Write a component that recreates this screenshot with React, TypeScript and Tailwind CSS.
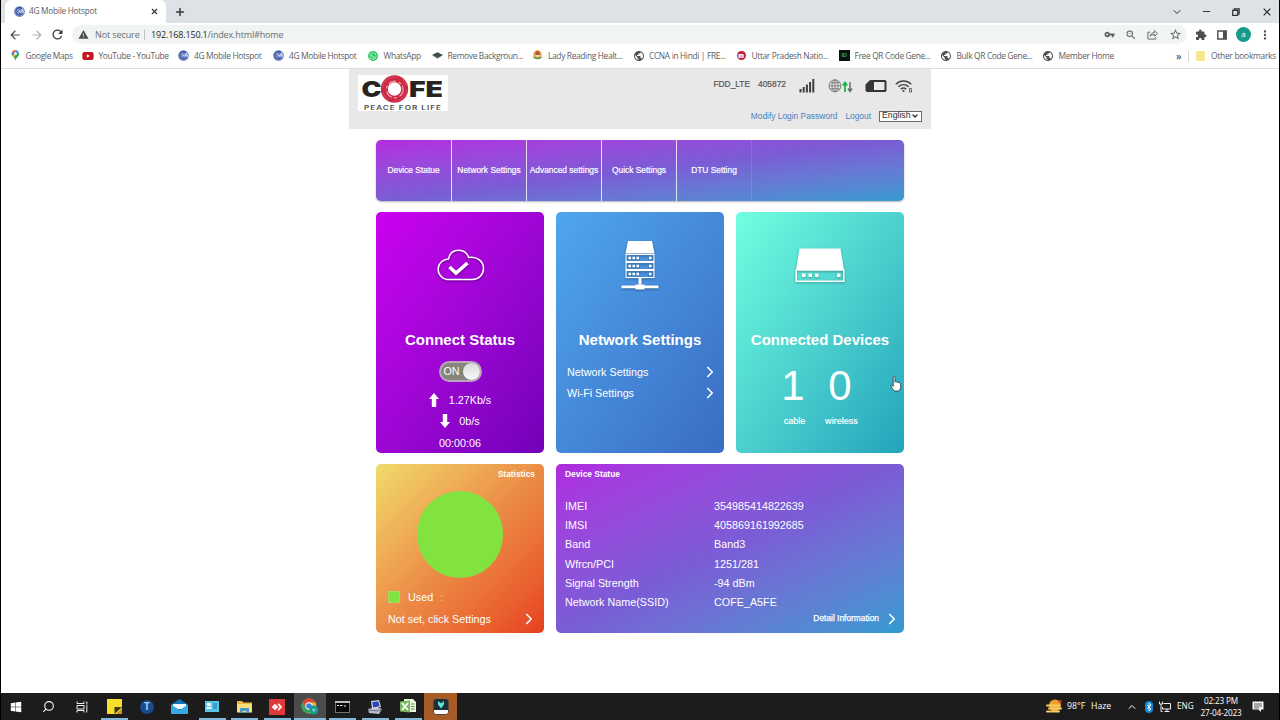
import type { ReactNode } from 'react'
import clsx from 'clsx'
import {
  MdArrowBack,
  MdArrowForward,
  MdExtension,
  MdMoreVert,
  MdPublic,
  MdRefresh,
  MdStarBorder,
  MdVpnKey,
  MdWarning,
  MdZoomOut,
} from 'react-icons/md'
import { FaWhatsapp, FaWindows, FaYoutube } from 'react-icons/fa'
import { ChevronDown, ChevronRight, ChevronUp, Minus, Plus, Search, X } from 'lucide-react'

/* ---------- favicons ---------- */

function HotspotIcon() {
  return (
    <svg viewBox="0 0 20 20" className="h-[11px] w-[11px]">
      <circle cx="10" cy="10" r="9.600" fill="#5a76b8" />
      <circle cx="10" cy="10" r="8.200" fill="#b9c8e8" />
      <path d="M14.500 4.800A6.600 6.600 0 1 0 16 12.800" fill="none" stroke="#2d4796" strokeWidth="2.400" />
      <path d="M13 8a3.400 3.400 0 1 0 .4 3.600" fill="none" stroke="#2d4796" strokeWidth="1.800" />
    </svg>
  )
}

function MapsIcon() {
  return (
    <svg viewBox="0 0 20 24" className="h-[11px] w-[9px]">
      <path d="M10 0a8 8 0 0 0-6.500 3.300L8 7z" fill="#ea4335" />
      <path d="M3.500 3.300A8 8 0 0 0 3 13l5-6z" fill="#4a6fb5" />
      <path d="M10 0a8 8 0 0 1 7 4l-10 12-4-3 6-7z" fill="#4285f4" />
      <path d="M17 4c2 4 1 8-2 11-3 3-4 5-5 9-1-4-2-6-5-9z" fill="#34a853" />
      <path d="M3 13l4-4 3 3-4 4z" fill="#fbbc04" />
      <circle cx="10" cy="8" r="3" fill="#fff" />
    </svg>
  )
}

function StackIcon() {
  return (
    <svg viewBox="0 0 20 12" className="h-[7px] w-[11px]">
      <path d="M10 0l10 5-10 6L0 5z" fill="#3f4c50" />
      <path d="M3 7l7 4 7-4" fill="none" stroke="#7d9c95" strokeWidth="1.500" />
    </svg>
  )
}

function LadyIcon() {
  return (
    <svg viewBox="0 0 20 20" className="h-[11px] w-[11px]">
      <circle cx="10" cy="8" r="7.500" fill="#e2a64a" />
      <circle cx="10" cy="8" r="4.500" fill="#f6dcc0" />
      <path d="M6 6a4 4 0 0 1 8 0v3H6z" fill="#b5523b" />
      <path d="M1 11c2 8 16 8 18 0-4 4-14 4-18 0z" fill="#5d8e3c" />
    </svg>
  )
}

function MicrosoftMark() {
  return (
    <div className="flex h-[9px] w-[9px] items-center justify-center rounded-full bg-[#c51f30] font-['Inter'] text-[6px] font-black text-white">
      m
    </div>
  )
}

const globe = <MdPublic className="h-[12px] w-[12px] text-[#4d5156]" />

const bookmarks: { label: string; icon: ReactNode; width: string }[] = [
  { label: 'Google Maps', icon: <MapsIcon />, width: 'w-[73px]' },
  { label: 'YouTube - YouTube', icon: <FaYoutube className="h-[12px] w-[12px] text-[#c4161f]" />, width: 'w-[95.500px]' },
  { label: '4G Mobile Hotspot', icon: <HotspotIcon />, width: 'w-[95px]' },
  { label: '4G Mobile Hotspot', icon: <HotspotIcon />, width: 'w-[94.500px]' },
  { label: 'WhatsApp', icon: <div className="flex h-[10px] w-[10px] items-center justify-center rounded-full bg-[#25c55b]"><FaWhatsapp className="h-[8px] w-[8px] text-white" /></div>, width: 'w-[64px]' },
  { label: 'Remove Backgroun...', icon: <StackIcon />, width: 'w-[100.500px]' },
  { label: 'Lady Reading Healt...', icon: <LadyIcon />, width: 'w-[101px]' },
  { label: 'CCNA in Hindi | FRE...', icon: globe, width: 'w-[102.500px]' },
  { label: 'Uttar Pradesh Natio...', icon: <MicrosoftMark />, width: 'w-[103px]' },
  { label: 'Free QR Code Gene...', icon: <div className="flex h-[11px] w-[11px] items-center justify-center bg-[#08130e] text-[6px] font-bold text-[#2f9465]">ID</div>, width: 'w-[102px]' },
  { label: 'Bulk QR Code Gene...', icon: globe, width: 'w-[102px]' },
  { label: 'Member Home', icon: globe, width: 'w-[134px]' },
]

/* ---------- browser chrome ---------- */

function Browser() {
  return (
    <div className="h-[69px] border-b border-[#dcdedf] bg-white font-['Open_Sans',sans-serif] text-[#5a5e63]">
      <div className="flex h-[23px] items-center bg-[#dee1e5] pl-[4px]">
        <div className="flex h-full w-[161px] items-center rounded-t-[6px] bg-white pl-[9px]">
          <HotspotIcon />
          <span className="ml-[4px] w-[120.500px] whitespace-nowrap text-[8.300px] tracking-[-0.270px]">4G Mobile Hotspot</span>
          <X className="h-[9px] w-[9px] text-[#2d3034]" strokeWidth={3} />
        </div>
        <Plus className="ml-[8px] h-[12px] w-[12px] text-[#35383b]" strokeWidth={3} />
        <div className="ml-auto flex items-center pr-[6px] text-[#303336]">
          <ChevronDown className="mr-[18px] h-[12px] w-[12px]" strokeWidth={2} />
          <Minus className="mr-[20px] h-[11px] w-[11px]" strokeWidth={2.2} />
          <svg viewBox="0 0 8 8" className="mr-[21px] h-[8px] w-[8px]" fill="none" stroke="currentColor">
            <path d="M.7 2.300h5v5h-5zM2.200 2V.8h5v5H6" strokeWidth="1.200" />
          </svg>
          <X className="h-[12px] w-[12px]" strokeWidth={2.2} />
        </div>
      </div>

      <div className="flex h-[23px] items-center pl-[7px]">
        <MdArrowBack className="h-[14px] w-[14px] text-[#4b4e52]" />
        <MdArrowForward className="ml-[7.500px] h-[14px] w-[14px] text-[#b0b3b6]" />
        <MdRefresh className="ml-[6.500px] h-[15px] w-[15px] text-[#3c3f43]" />
        <div className="ml-[7px] flex h-[19px] w-[1115px] items-center rounded-full bg-[#f0f4f2] pl-[6px] pr-[5px] text-[9px]">
          <MdWarning className="h-[11px] w-[11px] text-[#4b4e52]" />
          <span className="ml-[6px] w-[46px] whitespace-nowrap tracking-[-0.100px] text-[#6a6e72]">Not secure</span>
          <span className="ml-[3px] h-[10px] w-px bg-[#bfc3c5]" />
          <span className="ml-[6px] whitespace-nowrap tracking-[-0.150px] text-[#696d71]">
            <span className="text-[#25282b]">192.168.150.1</span>/index.html#home
          </span>
          <div className="ml-auto flex items-center text-[#5c6064]">
            <MdVpnKey className="mr-[10px] h-[11px] w-[11px]" />
            <MdZoomOut className="mr-[10px] h-[12px] w-[12px]" />
            <svg viewBox="0 0 12 12" className="mr-[11px] h-[11px] w-[11px]" fill="none" stroke="currentColor">
              <path d="M3.500 3.500H1v7.500h8.500V9M3.500 8c.4-3 2-4 4.500-4V1.800L11.500 5 8 8V6c-2 0-3.500.5-4.500 2z" />
            </svg>
            <MdStarBorder className="h-[13px] w-[13px]" />
          </div>
        </div>
        <MdExtension className="ml-[8px] h-[12px] w-[12px] text-[#4b4e52]" />
        <svg viewBox="0 0 10 10" className="ml-[10px] h-[10px] w-[10px] text-[#4b4e52]">
          <path d="M.8 1h8.400v8H.8z" fill="none" stroke="currentColor" strokeWidth="1.400" />
          <path d="M6 1h3v8H6z" fill="currentColor" />
        </svg>
        <div className="ml-[9px] flex h-[15px] w-[15px] items-center justify-center rounded-full bg-[#169b8c] pb-px text-[8px] text-white">a</div>
        <MdMoreVert className="ml-[7px] h-[14px] w-[14px] text-[#4b4e52]" />
      </div>

      <div className="flex h-[20px] items-center pl-[8px] text-[8.400px] tracking-[-0.340px]">
        {bookmarks.map(({ label, icon, width }, i) => (
          <div key={i} className={clsx('flex shrink-0 items-center whitespace-nowrap', width)}>
            <span className="mr-[4.500px] flex w-[12px] justify-center">{icon}</span>
            {label}
          </div>
        ))}
        <span className="w-[12px] shrink-0 text-[10px] font-semibold leading-none">»</span>
        <span className="h-[11px] w-px bg-[#d4d6d8]" />
        <span className="ml-[7px] h-[10px] w-[9px] rounded-[1px] bg-[#f6e68f]" />
        <span className="ml-[6px] whitespace-nowrap tracking-[-0.250px]">Other bookmarks</span>
      </div>
    </div>
  )
}

/* ---------- router page ---------- */

function Logo() {
  return (
    <svg viewBox="0 0 90 36" className="h-[36px] w-[90px] bg-white">
      <g fontFamily="Inter, sans-serif" fontWeight="900" fill="#262321">
        <text x="3.500" y="22" fontSize="21.500" textLength="20" lengthAdjust="spacingAndGlyphs">C</text>
        <text x="51" y="22" fontSize="21.500" textLength="34" lengthAdjust="spacingAndGlyphs">FE</text>
      </g>
      <circle cx="36.500" cy="14" r="10.200" fill="none" stroke="#cd2844" strokeWidth="7" />
      <circle cx="36.500" cy="14" r="12.200" fill="none" stroke="#de6275" strokeWidth=".6" strokeDasharray="20 6 8 5" />
      <circle cx="36.800" cy="14.500" r="8.300" fill="none" stroke="#eda5ae" strokeWidth="1.200" strokeDasharray="8 3 3 2" />
      <text x="6" y="34.800" fontSize="5.600" fontFamily="Inter, sans-serif" fontWeight="600" fill="#4c4746" textLength="78" lengthAdjust="spacingAndGlyphs" letterSpacing=".7">
        PEACE FOR LIFE
      </text>
    </svg>
  )
}

function Header() {
  return (
    <header className="flex h-[60px] justify-between bg-[#e8e8e8] pl-[9px] pr-[9px]">
      <div className="pt-[6px]">
        <Logo />
      </div>
      <div className="flex flex-col items-end text-[8.400px]">
        <div className="flex h-[34px] items-center pr-[9px] text-[#555] [-webkit-text-stroke:0.2px]">
          <span className="mr-[8px] pb-[3px]">FDD_LTE</span>
          <span className="mr-[13px] pb-[3px]">405872</span>
          <svg viewBox="0 0 16 14" className="mr-[13px] h-[14px] w-[16px]" fill="#3f3f3f">
            <path d="M.5 10h2v3.500h-2zM3.700 8h2v5.500h-2zM6.900 5.500h2v8h-2zM10.100 3h2v10.500h-2zM13.300 0h2v13.500h-2z" />
          </svg>
          <svg viewBox="0 0 25 14" className="mr-[12px] h-[14px] w-[25px]" fill="none">
            <g stroke="#777" strokeWidth=".9">
              <circle cx="7" cy="6.800" r="6" />
              <ellipse cx="7" cy="6.800" rx="3" ry="6" />
              <path d="M7 .8v12M1 6.800h12M2 3.800h10M2 9.800h10" />
            </g>
            <path d="M17 13V5M14.800 6.500L17 3.500l2.200 3" stroke="#19b34b" strokeWidth="1.800" />
            <path d="M22 3v8M20 9.500l2 3 2-3" stroke="#5f7465" strokeWidth="1.500" />
          </svg>
          <svg viewBox="0 0 22 14" className="mr-[8px] h-[14px] w-[22px]">
            <path d="M5 1.500h15a1 1 0 0 1 1 1v9a1 1 0 0 1-1 1H2a1 1 0 0 1-1-1V5.500z" fill="#353535" stroke="#353535" />
            <path d="M9 3h10.500v8H9z" fill="#e8e8e8" />
          </svg>
          <svg viewBox="0 0 18 14" className="h-[14px] w-[18px]" fill="none" stroke="#444">
            <path d="M.8 5.200c4.500-4.300 11-4.300 15.400 0M3.300 7.800c3.200-2.900 7.300-2.900 10.400 0M5.800 10.200c1.800-1.500 3.700-1.500 5.400 0" strokeWidth="1.500" />
            <circle cx="8.500" cy="12" r="1.100" fill="#444" stroke="none" />
            <path d="M14.500 9.500h2v3.500h-2z" strokeWidth=".8" />
          </svg>
        </div>
        <div className="flex h-[26px] items-center whitespace-nowrap text-[#4b7fc0]">
          <span className="mr-[8px]">Modify Login Password</span>
          <span className="mr-[8px]">Logout</span>
          <span className="flex h-[11px] w-[43px] items-center justify-between border border-[#6b6b6b] bg-white pl-[2px] pr-[2px] text-[8.700px] text-[#2b2b2b]">
            English
            <ChevronDown className="h-[8px] w-[8px]" strokeWidth={4} />
          </span>
        </div>
      </div>
    </header>
  )
}

const navItems = ['Device Statue', 'Network Settings', 'Advanced settings', 'Quick Settings', 'DTU Setting']

function Nav() {
  return (
    <nav className="mt-[11px] flex h-[61px] overflow-hidden rounded-[5px] bg-gradient-to-br from-[#b32ae0] via-[#7a5cd6] to-[#2f9ad0] shadow-[0_1px_2px_rgba(0,0,0,0.3)]">
      {navItems.map((item, i) => (
        <div
          key={item}
          className={clsx(
            'flex w-[75px] items-center justify-center whitespace-nowrap border-r pb-[1px] text-[8.400px] text-white [-webkit-text-stroke:0.2px]',
            i === navItems.length - 1 ? 'border-white/10' : 'border-white/80',
            i === 0 && 'w-[76px]',
          )}
        >
          {item}
        </div>
      ))}
    </nav>
  )
}

function Card({ title, icon, className, children }: { title: string; icon: ReactNode; className: string; children: ReactNode }) {
  return (
    <section className={clsx('h-[241px] w-[168px] rounded-[5px] bg-gradient-to-br text-white', className)}>
      <div className="flex h-[106px] items-center justify-center">{icon}</div>
      <h2 className="flex h-[43px] items-center justify-center whitespace-nowrap pt-[2px] text-[15px] font-bold">{title}</h2>
      {children}
    </section>
  )
}

function CloudIcon() {
  return (
    <svg viewBox="0 0 50 36" className="h-[36px] w-[50px] drop-shadow-[0_1px_1px_rgba(0,0,0,0.4)]" fill="none" stroke="#fff">
      <path
        d="M12 32.500A10.300 10.300 0 0 1 13.500 12c1-5.500 5-8.800 10.300-8.800 4.800 0 8.400 2.900 9.900 7.300 8-1.500 14.800 3.500 14.800 10.800 0 6.500-4.700 11.200-11 11.200z"
        strokeWidth="1.500"
      />
      <path d="M14.500 20l6.500 6L32.500 16" strokeWidth="3.600" />
    </svg>
  )
}

function ServerIcon() {
  return (
    <svg viewBox="0 0 40 52" className="h-[52px] w-[40px] drop-shadow-[0_1px_1px_rgba(0,0,0,0.35)]" fill="#fff">
      <path d="M8 2h24l2.500 12.500h-29z" />
      {[15.5, 23.5, 31.5].map((y) => (
        <g key={y}>
          <rect x="6" y={y} width="28" height="7" fill="none" stroke="#fff" strokeWidth="1.100" />
          <path d={`M8.500 ${y + 2.300}h2.500v2.400H8.500zM12.500 ${y + 2.300}h2.500v2.400h-2.500zM16.500 ${y + 2.300}h2.500v2.400h-2.500zM29 ${y + 2.300}h2.500v2.400H29z`} />
        </g>
      ))}
      <path d="M18.500 38.500h3v7h-3zM1.500 46.500h37v2.800h-37z" />
      <path d="M15.500 45.500h9v5h-9z" />
    </svg>
  )
}

function RouterIcon() {
  return (
    <svg viewBox="0 0 52 36" className="h-[36px] w-[52px] drop-shadow-[0_1px_1px_rgba(0,0,0,0.3)]" fill="#fff">
      <path d="M5.500 1.500h41L50 23H2z" />
      <path d="M2.200 23h47.600v11.300H2.200z" fill="none" stroke="#fff" strokeWidth="1.500" />
      <path d="M8 26.500h3.500V30H8zM14.500 26.500H18V30h-3.500zM21 26.500h3.500V30H21zM43 26.500h3.500V30H43z" />
    </svg>
  )
}

function Arrow({ down = false }: { down?: boolean }) {
  return (
    <svg viewBox="0 0 10 14" className={clsx('h-[14px] w-[10px]', down && 'rotate-180')} fill="#fff">
      <path d="M5 0l5 6H7.200v8H2.800V6H0z" />
    </svg>
  )
}

const Go = () => <ChevronRight className="h-[18px] w-[18px]" strokeWidth={2.2} />

function HandCursor() {
  return (
    <svg viewBox="0 0 12 17" className="absolute left-[154px] top-[164px] h-[16px] w-[12px]">
      <path
        d="M3 1.500c0-1.300 2-1.300 2 0v5c.3-.8 1.800-.7 2 .3.500-.7 1.800-.4 1.900.5.600-.5 2-.2 2 1V12c0 2.500-1.200 4-3.500 4H5.500C3.500 16 2.500 14 .8 11c-.6-1.200.7-1.800 1.300-1l.9 1z"
        fill="#fff"
        stroke="#234"
        strokeWidth=".9"
      />
    </svg>
  )
}

const deviceInfo = [
  ['IMEI', '354985414822639'],
  ['IMSI', '405869161992685'],
  ['Band', 'Band3'],
  ['Wfrcn/PCI', '1251/281'],
  ['Signal Strength', '-94 dBm'],
  ['Network Name(SSID)', 'COFE_A5FE'],
]

function Dashboard() {
  return (
    <div className="mx-auto w-[528px] text-[10.780px]">
      <Nav />
      <div className="mt-[11px] flex gap-[12px]">
        <Card title="Connect Status" icon={<CloudIcon />} className="from-[#cb00f0] to-[#7200b8]">
          <div className="mx-auto flex h-[21px] w-[43px] items-center justify-between rounded-full border-2 border-[#b9a5bd] bg-[#85857c] pl-[3px]">
            <span>ON</span>
            <span className="h-[17px] w-[17px] rounded-full bg-gradient-to-b from-[#d9d9d9] to-[#fafafa]" />
          </div>
          <div className="mt-[7px] text-center">
            <div className="flex h-[21.400px] items-center justify-center gap-[10px]">
              <Arrow /> 1.27Kb/s
            </div>
            <div className="flex h-[21.400px] items-center justify-center gap-[9px]">
              <Arrow down /> 0b/s
            </div>
            <div className="flex h-[21.400px] items-center justify-center pt-px">00:00:06</div>
          </div>
        </Card>

        <Card title="Network Settings" icon={<ServerIcon />} className="from-[#50a6ee] to-[#3a6cc3]">
          {['Network Settings', 'Wi-Fi Settings'].map((label) => (
            <div key={label} className="flex h-[21.500px] items-center justify-between pl-[11px] pr-[5px]">
              {label}
              <Go />
            </div>
          ))}
        </Card>

        <div className="relative">
          <Card title="Connected Devices" icon={<RouterIcon />} className="from-[#72ffe0] to-[#22a4bb]">
            <div className="flex pl-[35px] text-center">
              {[['1', 'cable'], ['0', 'wireless']].map(([count, label]) => (
                <div key={label} className="w-[47px]">
                  <div className="h-[49px] pr-[3px] text-[42px] leading-[49px]">{count}</div>
                  <div className="text-[9.100px] leading-[23px] [-webkit-text-stroke:0.15px]">{label}</div>
                </div>
              ))}
            </div>
          </Card>
          <HandCursor />
        </div>
      </div>

      <div className="mt-[11px] flex gap-[12px] text-white">
        <section className="h-[169px] w-[168px] rounded-[5px] bg-gradient-to-br from-[#efdb6b] via-[#eb8c46] to-[#e73e20]">
          <h3 className="h-[27px] pr-[9px] text-right text-[8.400px] font-bold leading-[21px]">Statistics</h3>
          <div className="mx-auto h-[87px] w-[86px] rounded-full bg-[#82e340]" />
          <div className="mt-[8px] flex h-[22px] items-center pl-[12px]">
            <span className="mr-[8px] h-[12px] w-[12px] border border-[#a5dc60] bg-[#82e340]" />
            Used
            <span className="ml-[7px] opacity-60">:</span>
          </div>
          <div className="flex h-[22px] items-center justify-between pl-[12px] pr-[6px]">
            Not set, click Settings
            <Go />
          </div>
        </section>

        <section className="h-[169px] w-[348px] rounded-[5px] bg-gradient-to-br from-[#b02ae0] via-[#7a5cd6] to-[#2f9ad0]">
          <h3 className="h-[32.500px] pl-[9px] text-[8.400px] font-bold leading-[21px]">Device Statue</h3>
          {deviceInfo.map(([label, value]) => (
            <div key={label} className="flex h-[19.200px] items-center pl-[9px]">
              <span className="w-[149px]">{label}</span>
              <span>{value}</span>
            </div>
          ))}
          <div className="flex h-[14px] items-center justify-end gap-[4px] pr-[3px] text-[8.400px] [-webkit-text-stroke:0.25px]">
            Detail Information
            <Go />
          </div>
        </section>
      </div>
    </div>
  )
}

/* ---------- taskbar ---------- */

const taskIcons: { name: string; icon: ReactNode; open?: boolean; bg?: string }[] = [
  { name: 'start', icon: <FaWindows className="h-[12px] w-[12px] text-white" /> },
  { name: 'search', icon: <Search className="h-[13px] w-[13px] -scale-x-100 text-white" strokeWidth={2} /> },
  {
    name: 'task view',
    icon: (
      <svg viewBox="0 0 12 12" className="h-[12px] w-[12px]" fill="none" stroke="#eee">
        <path d="M1 .5V2.500h7V.5M1 11.500v-2h7v2M1 4.500h7v3.500H1zM10.800.5v3M10.800 6v5.500M9.800 5h2" />
      </svg>
    ),
  },
  {
    name: 'notes',
    open: true,
    icon: (
      <svg viewBox="0 0 15 15" className="h-[15px] w-[15px]">
        <path d="M0 0h15v15H0z" fill="#f8df29" />
        <path d="M7.500 15V8H15z" fill="#40391a" />
        <path d="M9 15l6-6v6z" fill="#c79922" />
      </svg>
    ),
  },
  {
    name: 'teamviewer',
    icon: <div className="flex h-[14px] w-[14px] items-center justify-center rounded-full bg-[#174b8b] text-[10px] font-bold text-[#a8cdf2]">T</div>,
  },
  {
    name: 'mail',
    icon: (
      <svg viewBox="0 0 17 15" className="h-[15px] w-[17px]">
        <path d="M0 5.500L8.500 0 17 5.500V15H0z" fill="#1172b8" />
        <path d="M2 5h13v5H2z" fill="#f4fbff" />
        <path d="M0 5.500l8.500 5.500L17 5.500V15H0z" fill="#38a9e4" />
      </svg>
    ),
  },
  {
    name: 'contacts',
    open: true,
    icon: (
      <svg viewBox="0 0 14 11" className="h-[11px] w-[14px]">
        <path d="M0 0h14v11H0z" fill="#5bc3ea" />
        <path d="M2 2h4v3H2zM1.500 6h5v2h-5z" fill="#e9fbff" />
        <path d="M8 3h4M8 5h4M8 7h4" stroke="#187aa8" />
      </svg>
    ),
  },
  {
    name: 'explorer',
    open: true,
    icon: (
      <svg viewBox="0 0 15 13" className="h-[13px] w-[15px]">
        <path d="M0 1h5l1.500 1.500H15V12H0z" fill="#e9b53d" />
        <path d="M0 4h15v8.500H0z" fill="#fbdc7a" />
        <path d="M3 8h9v5H9.500v-2h-4v2H3z" fill="#4798cb" />
      </svg>
    ),
  },
  {
    name: 'anydesk',
    open: true,
    icon: (
      <svg viewBox="0 0 16 16" className="h-[16px] w-[16px]">
        <path d="M0 0h16v16H0z" fill="#e0373b" />
        <path d="M6 4.700L9.300 8 6 11.300 2.700 8z" fill="#fff" />
        <path d="M8.500 5L9.700 4.200 13.300 8l-3.600 3.800L8.500 11l2.200-3z" fill="#fff" />
      </svg>
    ),
  },
  {
    name: 'chrome',
    open: true,
    bg: 'bg-[#4b4b4b]',
    icon: (
      <svg viewBox="0 0 18 17" className="h-[17px] w-[18px]">
        <circle cx="8" cy="8" r="7.500" fill="#e3bd37" />
        <path d="M1.500 4.200A7.500 7.500 0 0 1 14.600 4.500H8L5 10z" fill="#dc4437" />
        <path d="M1.500 4.200A7.500 7.500 0 0 0 7.500 15.500L11 9.500 5 10z" fill="#36a15a" />
        <circle cx="8" cy="8" r="3.700" fill="#fff" />
        <circle cx="8" cy="8" r="2.800" fill="#3f7fe0" />
        <circle cx="12.800" cy="12" r="4.500" fill="#179a91" />
        <circle cx="12.800" cy="12" r="1.200" fill="none" stroke="#bfeae4" strokeWidth=".8" />
      </svg>
    ),
  },
  {
    name: 'terminal',
    open: true,
    icon: (
      <svg viewBox="0 0 15 12" className="h-[12px] w-[15px]">
        <path d="M.4.4h14.200v11.200H.4z" fill="#050505" stroke="#999" strokeWidth=".8" />
        <path d="M0 0h15v2H0z" fill="#bbb" />
        <path d="M2 4.500h2M5 4.500h2.500M9 5h2" stroke="#eee" />
      </svg>
    ),
  },
  {
    name: 'putty',
    open: true,
    icon: (
      <svg viewBox="0 0 16 16" className="h-[16px] w-[16px]">
        <path d="M1 10l9-2 5 2-3 5-10-1z" fill="#b9bdcc" />
        <path d="M4 2l8-1 2 7-9 2z" fill="#d7daea" />
        <path d="M5.300 3l6-.8 1.300 5-6.500 1.300z" fill="#2847b8" />
        <path d="M1 11l10 1 4-2" fill="none" stroke="#6b7084" />
      </svg>
    ),
  },
  {
    name: 'excel',
    open: true,
    icon: (
      <svg viewBox="0 0 16 15" className="h-[15px] w-[16px]">
        <path d="M4 0h9l3 3v10H4z" fill="#e8f4dd" />
        <path d="M0 2.500l10-1v12l-10-1z" fill="#79b95d" />
        <path d="M2 4l6 7M8 4l-6 7" stroke="#fff" strokeWidth="1.800" />
        <path d="M11 5h3.500M11 7.500h3.500M11 10h3.500" stroke="#549a3e" />
      </svg>
    ),
  },
  {
    name: 'filmora',
    bg: 'bg-[#a75b26]',
    icon: (
      <svg viewBox="0 0 16 16" className="h-[16px] w-[16px]">
        <rect x=".5" width="15" height="15.500" rx="3" fill="#1c2f38" />
        <path d="M5 2l3 2.200L11 2v3.500L8 9.500l-3-4z" fill="#60e2d2" />
        <path d="M1 11h14v2a2 2 0 0 1-2 2H3a2 2 0 0 1-2-2z" fill="#fff" />
      </svg>
    ),
  },
]

function Taskbar() {
  return (
    <div className="flex h-[27px] items-center justify-between bg-[#1c1c1c] font-['Open_Sans',sans-serif] text-white">
      <div className="-ml-px flex h-full">
        {taskIcons.map(({ name, icon, open, bg }) => (
          <div key={name} className={clsx('flex w-[32.650px] flex-col items-center', bg)}>
            <div className="flex h-[25px] items-center justify-center pt-[2px]">{icon}</div>
            {open && <div className={clsx('h-[2px] bg-[#83b9dc]', bg ? 'w-full' : 'w-[27px]')} />}
          </div>
        ))}
      </div>
      <div className="flex h-full items-center whitespace-nowrap text-[8.700px]">
        <svg viewBox="0 0 16 15" className="mr-[5px] h-[15px] w-[16px]">
          <circle cx="9" cy="6.500" r="6" fill="#f0a22d" />
          <circle cx="14" cy="2.500" r="1.600" fill="#d3472c" />
          <path d="M1 6.500h12M3 9.500h12M1 12.500h12" stroke="#f8cd67" strokeWidth="2" strokeLinecap="round" />
        </svg>
        <span className="w-[24px]">98°F</span>
        <span className="w-[35px]">Haze</span>
        <ChevronUp className="mr-[7px] h-[12px] w-[12px]" strokeWidth={2} />
        <svg viewBox="0 0 8 12" className="mr-[6px] h-[12px] w-[8px]">
          <rect width="8" height="12" rx="4" fill="#1287d6" />
          <path d="M2 4l4 4-2 2V2l2 2-4 4" fill="none" stroke="#fff" strokeWidth=".9" />
        </svg>
        <svg viewBox="0 0 12 11" className="mr-[6px] h-[11px] w-[12px]" fill="none" stroke="#eee">
          <path d="M4.500 2.500h7v5.500h-8V6M5.500 10.500h5M8 8v2.500M.5.500v2.500h3V.5M2 3v7.500h1.500" />
        </svg>
        <span className="w-[25px] text-[8.200px]">ENG</span>
        <div className="mr-[12px] w-[38px] text-center text-[8.200px] leading-[12px] tracking-[-0.150px]">
          <div>02:23 PM</div>
          <div className="-mx-[3px]">27-04-2023</div>
        </div>
        <svg viewBox="0 0 12 12" className="mr-[15px] h-[12px] w-[12px]">
          <path d="M.5.500h11v8H9V11L6.500 8.500h-6z" fill="#f5f5f5" />
          <path d="M2 3h8M2 5h8M2 7h5" stroke="#333" strokeWidth=".8" />
        </svg>
      </div>
    </div>
  )
}

export default function App() {
  return (
    <div className="flex h-[720px] w-[1280px] flex-col overflow-hidden border-x border-black bg-white">
      <Browser />
      <main className="flex-1 font-['Liberation_Sans',sans-serif]">
        <div className="ml-[348px] w-[582px]">
          <Header />
          <Dashboard />
        </div>
      </main>
      <Taskbar />
    </div>
  )
}
